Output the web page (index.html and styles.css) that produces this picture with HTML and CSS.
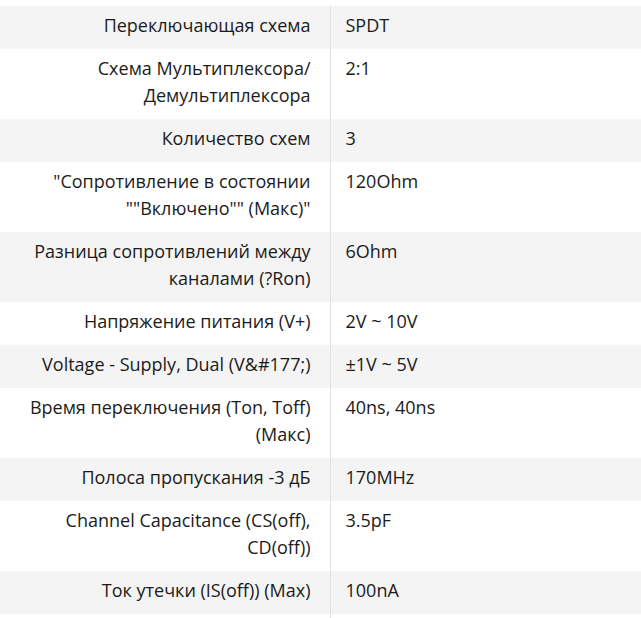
FILE: index.html
```html
<!DOCTYPE html>
<html lang="ru">
<head>
<meta charset="utf-8">
<title>Характеристики</title>
<link rel="stylesheet" href="styles.css">
</head>
<body>
<table class="specs">
  <colgroup><col class="col-name"><col class="col-value"></colgroup>
  <tbody>
    <tr><td class="name">Переключающая схема</td><td class="value">SPDT</td></tr>
    <tr><td class="name">Схема Мультиплексора/ Демультиплексора</td><td class="value">2:1</td></tr>
    <tr><td class="name">Количество схем</td><td class="value">3</td></tr>
    <tr><td class="name">"Сопротивление в состоянии ""Включено"" (Макс)"</td><td class="value">120Ohm</td></tr>
    <tr><td class="name">Разница сопротивлений между каналами (?Ron)</td><td class="value">6Ohm</td></tr>
    <tr><td class="name">Напряжение питания (V+)</td><td class="value">2V ~ 10V</td></tr>
    <tr><td class="name">Voltage - Supply, Dual (V&amp;#177;)</td><td class="value">±1V ~ 5V</td></tr>
    <tr><td class="name">Время переключения (Ton, Toff) (Макс)</td><td class="value">40ns, 40ns</td></tr>
    <tr><td class="name">Полоса пропускания -3 дБ</td><td class="value">170MHz</td></tr>
    <tr><td class="name">Channel Capacitance (CS(off), CD(off))</td><td class="value">3.5pF</td></tr>
    <tr><td class="name">Ток утечки (IS(off)) (Max)</td><td class="value">100nA</td></tr>
    <tr class="spacer"><td class="name"></td><td class="value"></td></tr>
  </tbody>
</table>
</body>
</html>
```
FILE: styles.css
```css
html, body {
  margin: 0;
  padding: 0;
  background: #ffffff;
}

body {
  font-family: "Open Sans", "Noto Sans", sans-serif;
  font-size: 18px;
  color: #1b1b1b;
}

.specs {
  width: 641px;
  margin-top: 6px;
  border-collapse: collapse;
  table-layout: fixed;
}

.col-name { width: 330px; }
.col-value { width: 311px; }

.specs td {
  padding: 6px 0 10px;
  line-height: 27px;
  vertical-align: top;
}

.specs tr:nth-child(odd) td {
  background: #f4f4f4;
}

.specs .name {
  text-align: right;
  padding-right: 19px;
  padding-left: 10px;
}

.specs .value {
  text-align: left;
  padding-left: 15px;
  border-left: 1px solid #e2e2e2;
}

.specs .spacer td {
  height: 27px;
}
```
